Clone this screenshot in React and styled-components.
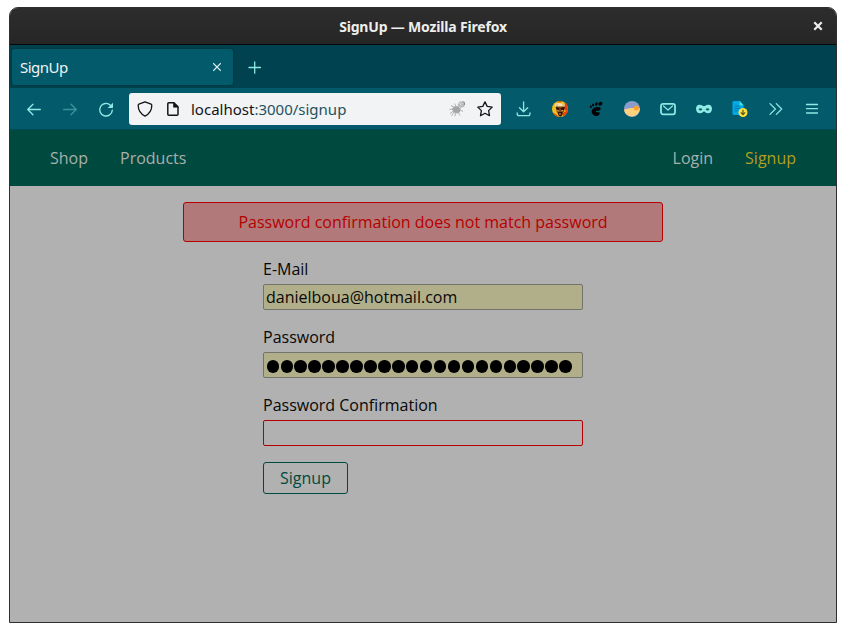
import React from "react";
import styled, { createGlobalStyle } from "styled-components";

const GlobalStyle = createGlobalStyle`
  * { box-sizing: border-box; }
  html, body { margin: 0; background: #fff; }
  body { padding: 7px 9px 9px; font-family: "Open Sans", sans-serif; overflow: hidden; }
`;

const UI_FONT = '"Noto Sans", "Open Sans", sans-serif';

const Window = styled.div`
  width: 828px;
  height: 616px;
  display: flex;
  flex-direction: column;
  border: 1px solid #2f2f2f;
  border-radius: 9px 9px 0 0;
  overflow: hidden;
  background: #b1b1b1;
`;

const TitleBar = styled.header`
  height: 37px;
  flex: none;
  display: grid;
  grid-template-columns: 36px 1fr 36px;
  align-items: center;
  background: linear-gradient(#2d2d2d, #262626);
  border-bottom: 1px solid #070707;
  color: #eeeeec;
`;

const WindowTitle = styled.div`
  grid-column: 2;
  padding-top: 2px;
  text-align: center;
  font: bold 14px/20px ${UI_FONT};
  letter-spacing: -0.18px;
  white-space: nowrap;
`;

const CloseWindow = styled.button`
  display: flex;
  justify-content: center;
  padding: 0;
  border: 0;
  background: none;
  color: inherit;
`;

const TabStrip = styled.div`
  height: 43px;
  flex: none;
  display: flex;
  align-items: center;
  padding: 0 2px;
  background: #00424f;
`;

const Tab = styled.div`
  width: 221px;
  height: 36px;
  display: flex;
  align-items: center;
  justify-content: space-between;
  padding: 0 11px 0 8px;
  border-radius: 3px;
  background: #035a6b;
  box-shadow: 0 0 3px rgba(0, 0, 0, 0.3);
  color: #f1f3f5;
  font: 15px/20px ${UI_FONT};
  letter-spacing: -0.5px;
`;

const TabButton = styled.button`
  display: flex;
  padding: 0;
  border: 0;
  background: none;
  color: ${(p) => p.$color};
  margin-left: ${(p) => p.$gap || "0"};
`;

const Toolbar = styled.div`
  height: 42px;
  flex: none;
  display: flex;
  align-items: center;
  padding: 0 6px;
  background: #035a6b;
  border-bottom: 1px solid #024b52;
`;

const ToolButton = styled.button`
  width: 36px;
  height: 32px;
  flex: none;
  display: flex;
  align-items: center;
  justify-content: center;
  padding: 0;
  border: 0;
  background: none;
  color: #8ce9e3;
  opacity: ${(p) => (p.$dim ? 0.4 : 1)};
`;

const UrlBar = styled.div`
  flex: 1;
  height: 32px;
  margin: 0 5px;
  display: flex;
  align-items: center;
  gap: 12px;
  padding: 0 8px;
  border-radius: 3px;
  background: #f1f3f5;
  color: #15141a;
`;

const Address = styled.div`
  flex: 1;
  margin-left: -2px;
  font: 15px/20px ${UI_FONT};
  letter-spacing: 0;
  color: #15141a;
`;

const AddressRest = styled.span`
  color: #1f525b;
`;

const SiteNav = styled.nav`
  height: 56px;
  flex: none;
  display: flex;
  align-items: center;
  justify-content: space-between;
  padding: 0 40px;
  background: #00493e;
`;

const NavGroup = styled.div`
  display: flex;
  gap: 32px;
`;

const NavLink = styled.a`
  font-size: 16px;
  line-height: 24px;
  color: ${(p) => (p.$active ? "#b19f20" : "#a7b0ad")};
`;

const Page = styled.main`
  flex: 1;
  display: flex;
  flex-direction: column;
  align-items: center;
  padding-top: 16px;
  font-size: 16px;
  color: #080808;
`;

const ErrorMessage = styled.div`
  width: 480px;
  height: 40px;
  display: flex;
  align-items: center;
  justify-content: center;
  border: 1px solid #b60000;
  border-radius: 3px;
  background: #b17979;
  color: #b60000;
`;

const Form = styled.form`
  width: 320px;
  margin-top: 16px;
`;

const Field = styled.div`
  margin-bottom: 16px;
`;

const Label = styled.label`
  display: block;
  height: 22px;
  line-height: 22px;
  margin-bottom: 4px;
`;

const Input = styled.div`
  height: 26px;
  display: flex;
  align-items: center;
  padding: 0 2px;
  border: 1px solid ${(p) => (p.$invalid ? "#b60000" : "#74746e")};
  border-radius: 2px;
  background: ${(p) => (p.$filled ? "#b1af8a" : "transparent")};
`;

const Dots = styled.div`
  display: flex;
  gap: 1.45px;
  padding: 3px 0 0 0.6px;
`;

const Dot = styled.span`
  width: 12.5px;
  height: 12.5px;
  border-radius: 50%;
  background: #000;
`;

const SubmitButton = styled.button`
  display: block;
  width: 85px;
  height: 32px;
  padding: 0;
  border: 1px solid #00493e;
  border-radius: 3px;
  background: transparent;
  color: #00493e;
  font: 16px/22px "Open Sans", sans-serif;
`;

const Svg = styled.svg.attrs({ viewBox: "0 0 16 16", fill: "none" })`
  width: ${(p) => p.$size || 16}px;
  height: ${(p) => p.$size || 16}px;
  display: block;
  flex: none;
  overflow: visible;
`;

const line = { stroke: "currentColor", strokeWidth: 1.3, strokeLinecap: "round", strokeLinejoin: "round" };

const BackIcon = () => <Svg><path d="M14.3 8.5H1.7M7 3.2L1.7 8.5L7 13.8" {...line} /></Svg>;
const ForwardIcon = () => <Svg><path d="M1.7 8.5H14.3M9 3.2L14.3 8.5L9 13.8" {...line} /></Svg>;
const ReloadIcon = () => (
  <Svg>
    <path d="M12.4 4.2A6.3 6.3 0 1 0 14.3 9.2" {...line} strokeWidth="1.4" />
    <path d="M15 1.7V6.6Q15 7 14.5 7H9.7Z" fill="currentColor" />
  </Svg>
);
const ShieldIcon = () => (
  <Svg><path d="M8 .8L14.1 3.2Q14.8 3.5 14.8 4.3C14.8 9 12 13.1 8 15.1C4 13.1 1.2 9 1.2 4.3Q1.2 3.5 1.9 3.2Z" {...line} strokeWidth="1.3" /></Svg>
);
const PageIcon = () => (
  <Svg>
    <path d="M3.8 1.7H9L13 5.7V13.2Q13 14.2 12 14.2H3.8Q2.8 14.2 2.8 13.2V2.7Q2.8 1.7 3.8 1.7Z" {...line} strokeWidth="1.5" />
    <path d="M8.5 1.5V6.2H13.2Z" fill="currentColor" stroke="currentColor" strokeWidth=".6" />
  </Svg>
);
const StarIcon = () => (
  <Svg><path d="M8 .9L10.2 5.4L15.2 6.1L11.6 9.6L12.5 14.7L8 12.3L3.5 14.7L4.4 9.6L.8 6.1L5.8 5.4Z" {...line} strokeWidth="1.3" /></Svg>
);
const BugIcon = () => (
  <Svg>
    <path d="M3 8L5 5.5L9 5L11.5 7.5L11 11L8 12.5L4.5 11Z" fill="#a5a5a7" />
    <path d="M8.5 4L10.5 .5L14.5 .8L15.7 5.5L11.5 7Z" fill="#b9b9bb" />
    <path d="M5 6L2 4.5M4 8L.5 8.5M4.5 10L1 12.5M6.5 11L6 15.3M9 11L11 14.5M10.5 8.5L14 10.5M7 5.5L5.5 2.5M2.5 15L5 11" stroke="#a9a9ab" strokeWidth=".9" />
    <path d="M10.2 2.2L12.5 4.5M12 1.5L13.5 3" stroke="#ececee" strokeWidth=".9" />
    <path d="M13 .8L15.5 1.3V4" stroke="#8e8e90" strokeWidth="1" />
  </Svg>
);
const DownloadIcon = () => (
  <Svg><path d="M7.6 .8V10.6M3.5 6.7L7.6 10.8L11.7 6.7M1.2 11.8V12.7Q1.2 14.6 3.1 14.6H12.1Q14 14.6 14 12.7V11.8" {...line} /></Svg>
);
const FaceIcon = () => (
  <Svg>
    <defs><clipPath id="face"><circle cx="8" cy="8" r="8" /></clipPath></defs>
    <g clipPath="url(#face)">
      <rect width="16" height="16" fill="#f7bd1d" />
      <path d="M13 0L16 2V11L12 16L10 13L14 10L12 8Z" fill="#f03b08" />
      <path d="M0 11L5 14L7 16H0Z" fill="#df4b08" />
      <path d="M3 3L6 2L12.5 3L13 5.5L3 5.5Z" fill="#f5e4b8" />
      <path d="M4 5.5L12.5 5.5L12.2 10L9.5 15H7L4.6 10.5Z" fill="#80451c" />
      <path d="M3.5 5.8L7.3 7L7 9L4.5 8.3ZM8.7 7L13 5.8L12 8.8L9 9Z" fill="#261208" />
      <path d="M6 11H10.5L10 14.5L8 16L6.5 14Z" fill="#361508" />
      <path d="M5.3 9.7L7 10M9.3 9.8L11 9.5M7 13H9" stroke="#ebb36c" strokeWidth=".9" />
      <path d="M4 0H11L9 1.5H5Z" fill="#cb6a0c" />
      <path d="M10 4H13M4 4H6" stroke="#c99450" strokeWidth=".8" />
    </g>
  </Svg>
);
const FootIcon = () => (
  <Svg>
    <g fill="#000">
      <ellipse cx="12.3" cy="2.7" rx="2.2" ry="1.8" transform="rotate(-35 12.3 2.7)" />
      <ellipse cx="8.3" cy="3" rx="1.1" ry="1.8" transform="rotate(12 8.3 3)" />
      <ellipse cx="5.1" cy="4" rx="1" ry="1.6" transform="rotate(-5 5.1 4)" />
      <ellipse cx="2.8" cy="5.7" rx=".9" ry="1.4" transform="rotate(-25 2.8 5.7)" />
      <path d="M3.8 9.6C4.6 6.2 11.4 4.7 12.6 7.1C13.4 8.9 10.8 10.4 8.7 9.7C7.8 9.5 7.5 10.5 8.2 11C9.4 11.9 10.1 10.8 11.5 11.4C12.2 13.7 9.5 15.8 7.1 14.9C4.5 14 3.2 12.2 3.8 9.6Z" />
    </g>
  </Svg>
);
const DuneIcon = () => (
  <Svg>
    <circle cx="8" cy="8" r="8" fill="#8c9dcd" />
    <path d="M0 8.7C4 7 8 6.6 15.9 7.2A8 8 0 0 1 0 8.7Z" fill="#ffd17d" />
    <circle cx="12.3" cy="6.9" r="2.5" fill="#ff9f2c" />
  </Svg>
);
const MailIcon = () => (
  <Svg><rect x="1" y="2.9" width="14" height="10.4" rx="2" stroke="currentColor" strokeWidth="1.8" /><path d="M3.5 5L8 9L12.5 5" {...line} strokeWidth="1.2" /></Svg>
);
const MaskIcon = () => (
  <Svg><path fill="currentColor" fillRule="evenodd" d="M3.5 3.8C5.5 3.5 6.8 5.1 8 5.1S10.5 3.5 12.5 3.8C15 4 16 5.4 16 7.8C16 10.3 14.5 12.3 12 12.3C9.8 12.3 9 10.5 8 10.5S6.2 12.3 4 12.3C1.5 12.3 0 10.3 0 7.8C0 5.4 1 4 3.5 3.8ZM2.6 8.4C3.6 9.9 5.3 9.8 6.3 8.3C5.2 6.8 3.7 6.9 2.6 8.4ZM9.7 8.3C10.7 9.8 12.4 9.9 13.4 8.4C12.3 6.9 10.8 6.8 9.7 8.3Z" /></Svg>
);
const DocumentIcon = () => (
  <Svg>
    <path d="M1.8 0H8L11.5 3.8V14H1.8Q.5 14 .5 12.7V1.3Q.5 0 1.8 0Z" fill="#00a6e6" />
    <path d="M7.5 0L11.5 4.2H7.5Z" fill="#40e8d0" />
    <path d="M2.7 5.2H7M2.7 7.5H8.5M2.7 9.8H5.8" stroke="#087bab" strokeWidth="1.1" />
    <circle cx="11" cy="11.5" r="4.5" fill="#ffe03d" />
    <path d="M11 8.8V13.4M8.8 11.4L11 13.6L13.2 11.4" stroke="#545626" strokeWidth="1.2" />
  </Svg>
);
const OverflowIcon = () => <Svg><path d="M2 2.6L7.4 8L2 13.4M8.3 2.6L13.7 8L8.3 13.4" {...line} /></Svg>;
const MenuIcon = () => <Svg><path d="M2.5 3.5H13.5M2.5 7.7H13.5M2.5 12H13.5" {...line} strokeWidth="1.3" /></Svg>;
const CloseIcon = ({ weight }) => <Svg $size={10}><path d="M2 2L14 14M14 2L2 14" stroke="currentColor" strokeWidth={weight} /></Svg>;
const PlusIcon = () => <Svg><path d="M7.7 2.8V14.2M2 8.5H13.4" {...line} /></Svg>;

const extensions = [DownloadIcon, FaceIcon, FootIcon, DuneIcon, MailIcon, MaskIcon, DocumentIcon, OverflowIcon, MenuIcon];

export default function App() {
  return (
    <>
      <GlobalStyle />
      <Window>
        <TitleBar>
          <WindowTitle>SignUp — Mozilla Firefox</WindowTitle>
          <CloseWindow aria-label="Close window"><CloseIcon weight={3.5} /></CloseWindow>
        </TitleBar>
        <TabStrip>
          <Tab>
            SignUp
            <TabButton $color="#d9eeee" aria-label="Close tab"><CloseIcon weight={1.7} /></TabButton>
          </Tab>
          <TabButton $color="#8ce9e3" $gap="14px" aria-label="New tab"><PlusIcon /></TabButton>
        </TabStrip>
        <Toolbar>
          <ToolButton aria-label="Back"><BackIcon /></ToolButton>
          <ToolButton $dim aria-label="Forward"><ForwardIcon /></ToolButton>
          <ToolButton aria-label="Reload"><ReloadIcon /></ToolButton>
          <UrlBar>
            <ShieldIcon />
            <PageIcon />
            <Address>localhost<AddressRest>:3000/signup</AddressRest></Address>
            <BugIcon />
            <StarIcon />
          </UrlBar>
          {extensions.map((Icon, i) => (
            <ToolButton key={i}><Icon /></ToolButton>
          ))}
        </Toolbar>
        <SiteNav>
          <NavGroup>
            <NavLink>Shop</NavLink>
            <NavLink>Products</NavLink>
          </NavGroup>
          <NavGroup>
            <NavLink>Login</NavLink>
            <NavLink $active>Signup</NavLink>
          </NavGroup>
        </SiteNav>
        <Page>
          <ErrorMessage>Password confirmation does not match password</ErrorMessage>
          <Form>
            <Field>
              <Label>E-Mail</Label>
              <Input $filled>danielboua@hotmail.com</Input>
            </Field>
            <Field>
              <Label>Password</Label>
              <Input $filled>
                <Dots>
                  {Array.from({ length: 22 }, (_, i) => <Dot key={i} />)}
                </Dots>
              </Input>
            </Field>
            <Field>
              <Label>Password Confirmation</Label>
              <Input $invalid />
            </Field>
            <SubmitButton type="button">Signup</SubmitButton>
          </Form>
        </Page>
      </Window>
    </>
  );
}
